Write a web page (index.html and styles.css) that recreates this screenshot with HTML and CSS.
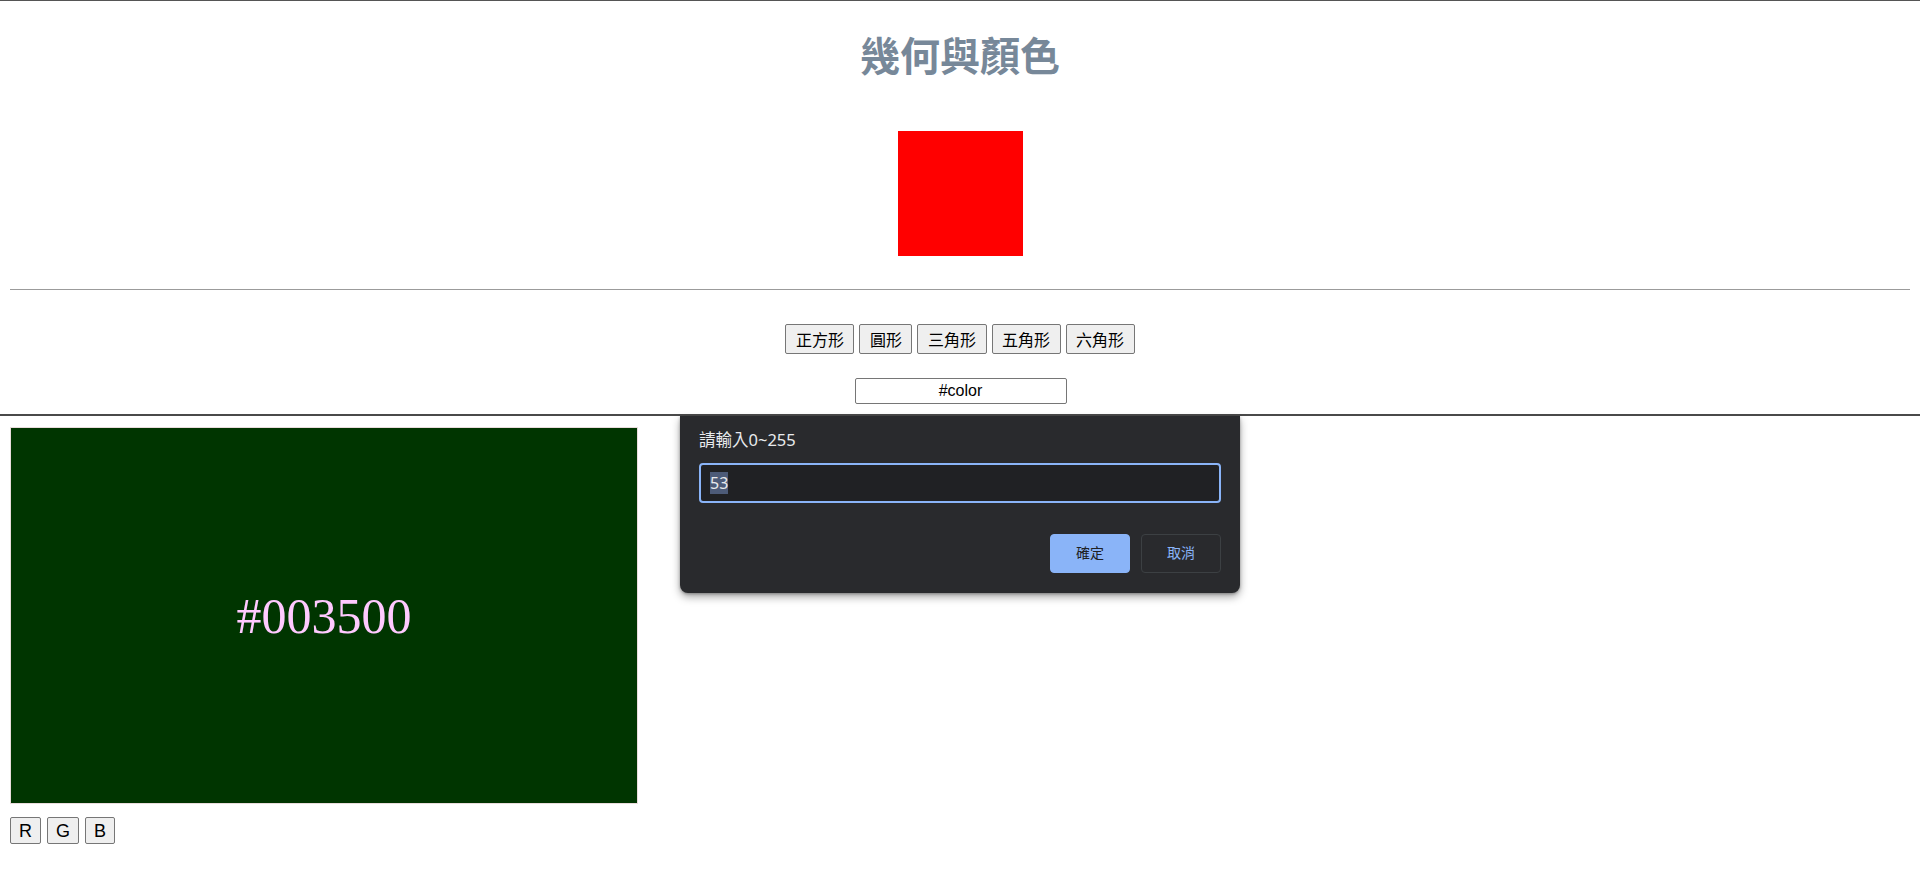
FILE: index.html
```html
<!DOCTYPE html>
<html lang="zh-Hant">
<head>
<meta charset="utf-8">
<title>幾何與顏色</title>
<link rel="stylesheet" href="styles.css">
</head>
<body>
<header class="top">
  <h1 class="title">幾何與顏色</h1>
  <div class="stage"><div class="shape"></div></div>
  <hr class="rule">
  <div class="shape-buttons">
    <button class="btn cjk">正方形</button>
    <button class="btn cjk">圓形</button>
    <button class="btn cjk">三角形</button>
    <button class="btn cjk">五角形</button>
    <button class="btn cjk">六角形</button>
  </div>
  <div class="color-row"><input class="color-input" type="text" value="#color"></div>
</header>
<main class="lower">
  <div class="swatch"><span class="swatch-text">#003500</span></div>
  <div class="rgb-buttons">
    <button class="btn latin">R</button>
    <button class="btn latin">G</button>
    <button class="btn latin">B</button>
  </div>
</main>
<div class="dialog">
  <div class="dialog-label">請輸入0~255</div>
  <div class="dialog-field"><span class="sel">53</span></div>
  <div class="dialog-actions">
    <button class="dbtn primary">確定</button>
    <button class="dbtn secondary">取消</button>
  </div>
</div>
</body>
</html>
```
FILE: styles.css
```css
html, body {
  margin: 0;
  padding: 0;
  background: #ffffff;
}
body {
  font-family: "Liberation Sans", "Noto Sans CJK TC", sans-serif;
  position: relative;
  min-height: 892px;
}
.top {
  border-top: 1px solid #555555;
  border-bottom: 2px solid #4a4a4a;
  padding: 0 10px 10px;
  display: flex;
  flex-direction: column;
  align-items: center;
}
.title {
  margin: 33px 0 0;
  font-family: "Noto Sans CJK TC", sans-serif;
  font-size: 40px;
  line-height: 40px;
  font-weight: 700;
  color: #778899;
  text-align: center;
}
.stage {
  margin-top: 57px;
  display: flex;
  justify-content: center;
  width: 100%;
}
.shape {
  width: 125px;
  height: 125px;
  background: #ff0000;
  margin-left: 1px;
}
.rule {
  align-self: stretch;
  margin: 33px 0 0;
  border: 0;
  border-top: 1px solid #9b9b9b;
  height: 0;
}
.shape-buttons {
  margin-top: 34px;
  display: flex;
  gap: 5px;
  justify-content: center;
}
.btn {
  background: #efefef;
  border: 1px solid #767676;
  border-radius: 2px;
  color: #000000;
  margin: 0;
  cursor: pointer;
}
.btn.cjk {
  font-family: "Noto Sans CJK TC", sans-serif;
  font-size: 16px;
  height: 30px;
  line-height: 22px;
  padding: 0 9.5px;
}
.btn.latin {
  font-family: "Liberation Sans", sans-serif;
  font-size: 18px;
  height: 27px;
  padding: 0 8px;
  line-height: 20px;
}
.color-row {
  margin-top: 24px;
  display: flex;
  justify-content: center;
}
.color-input {
  box-sizing: border-box;
  width: 212px;
  height: 26px;
  border: 1px solid #767676;
  border-radius: 2px;
  font-family: "Liberation Sans", sans-serif;
  font-size: 16px;
  text-align: center;
  color: #000000;
  padding: 0 2px;
  margin: 0 0 0 1px;
  background: #ffffff;
}
.lower {
  padding: 11px 10px 0;
}
.swatch {
  box-sizing: border-box;
  width: 628px;
  height: 377px;
  background: #003500;
  border: 1px solid #e9dcdc;
  display: flex;
  align-items: center;
  justify-content: center;
}
.swatch-text {
  font-family: "Liberation Serif", serif;
  font-size: 50px;
  color: #ffcaff;
  line-height: 1;
}
.rgb-buttons {
  margin-top: 13px;
  display: flex;
  gap: 6px;
}
.dialog {
  position: absolute;
  top: 416px;
  left: 680px;
  width: 560px;
  box-sizing: border-box;
  height: 177px;
  padding: 13px 19px 0 19px;
  background: #292a2d;
  border-radius: 0 0 8px 8px;
  box-shadow: 0 4px 8px rgba(0, 0, 0, 0.35), 0 1px 3px rgba(0, 0, 0, 0.3);
  z-index: 10;
  display: flex;
  flex-direction: column;
}
.dialog-label {
  font-family: "Noto Sans", "Noto Sans CJK TC", sans-serif;
  font-size: 16.5px;
  line-height: 22px;
  color: #e8eaed;
}
.dialog-field {
  margin-top: 12px;
  box-sizing: border-box;
  height: 40px;
  border: 2px solid #8ab4f8;
  border-radius: 4px;
  background: #202124;
  display: flex;
  align-items: center;
  padding-left: 9px;
}
.sel {
  font-family: "Noto Sans", sans-serif;
  font-size: 16px;
  line-height: 22px;
  color: #e8eaed;
  background: #4d5b78;
}
.dialog-actions {
  margin-top: 31px;
  display: flex;
  justify-content: flex-end;
  gap: 11px;
}
.dbtn {
  box-sizing: border-box;
  width: 80px;
  height: 39px;
  border-radius: 4px;
  font-family: "Noto Sans CJK TC", sans-serif;
  font-size: 14px;
  line-height: 20px;
  padding: 0 0 3px;
  margin: 0;
}
.dbtn.primary {
  background: #8ab4f8;
  border: 1px solid #8ab4f8;
  color: #202124;
}
.dbtn.secondary {
  background: #292a2d;
  border: 1px solid #3c4043;
  color: #8ab4f8;
}
```
